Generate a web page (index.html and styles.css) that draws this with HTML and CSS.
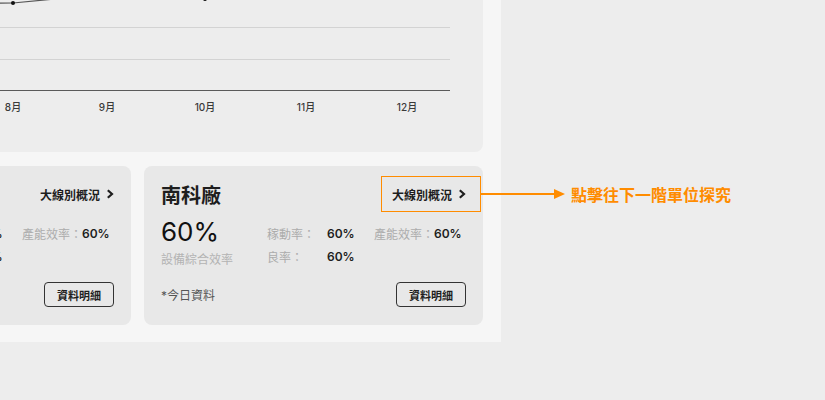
FILE: index.html
```html
<!DOCTYPE html>
<html lang="zh-Hant">

<head>
    <meta charset="utf-8">
    <title>廠區總覽</title>
    <link rel="stylesheet" href="styles.css">
</head>

<body>
    <div class="page">
        <section class="panel">
            <div class="chart-card">
                <svg class="chart" width="691" height="200" viewBox="-208 -48 691 200">
                    <line class="grid-line" x1="-180" y1="27.5" x2="450" y2="27.5" />
                    <line class="grid-line" x1="-180" y1="59.5" x2="450" y2="59.5" />
                    <line class="axis-line" x1="-180" y1="90.5" x2="450" y2="90.5" />
                    <polyline class="trend" points="-86,4 13,3 107,-6 205,-1 306,-22 405,-2" />
                    <circle class="dot" cx="13" cy="3" r="2" />
                    <circle class="dot" cx="107" cy="-6" r="2" />
                    <circle class="dot" cx="205" cy="-1" r="2" />
                    <circle class="dot" cx="306" cy="-22" r="2" />
                    <circle class="dot" cx="405" cy="-2" r="2" />
                    <text class="month" x="13" y="111">8月</text>
                    <text class="month" x="107" y="111">9月</text>
                    <text class="month" x="205" y="111">10月</text>
                    <text class="month" x="306" y="111">11月</text>
                    <text class="month" x="407" y="111">12月</text>
                </svg>
            </div>

            <div class="plant-list">
                <article class="plant-card">
                    <div class="plant-head">
                        <h2 class="plant-name">中科廠</h2>
                        <a class="drill-link" href="#">大線別概況
                            <svg width="8" height="10" viewBox="0 0 8 10"><path d="M1.8 1.2 L6 5 L1.8 8.8" /></svg>
                        </a>
                    </div>
                    <div class="plant-body">
                        <div class="oee">
                            <div class="oee-value">60%</div>
                            <div class="oee-label">設備綜合效率</div>
                        </div>
                        <div class="stats">
                            <span class="stat-label">稼動率：</span><span class="stat-value">60%</span>
                            <span class="stat-label">產能效率：</span><span class="stat-value">60%</span>
                            <span class="stat-label">良率：</span><span class="stat-value">60%</span>
                        </div>
                    </div>
                    <div class="plant-foot">
                        <span class="note">*今日資料</span>
                        <button class="detail-btn">資料明細</button>
                    </div>
                </article>

                <article class="plant-card">
                    <div class="plant-head">
                        <h2 class="plant-name">南科廠</h2>
                        <a class="drill-link is-noted" href="#">大線別概況
                            <svg width="8" height="10" viewBox="0 0 8 10"><path d="M1.8 1.2 L6 5 L1.8 8.8" /></svg>
                            <span class="callout">
                                <span class="callout-line"></span>
                                <span class="callout-head"></span>
                                <span class="callout-text">點擊往下一階單位探究</span>
                            </span>
                        </a>
                    </div>
                    <div class="plant-body">
                        <div class="oee">
                            <div class="oee-value">60%</div>
                            <div class="oee-label">設備綜合效率</div>
                        </div>
                        <div class="stats">
                            <span class="stat-label">稼動率：</span><span class="stat-value">60%</span>
                            <span class="stat-label">產能效率：</span><span class="stat-value">60%</span>
                            <span class="stat-label">良率：</span><span class="stat-value">60%</span>
                        </div>
                    </div>
                    <div class="plant-foot">
                        <span class="note">*今日資料</span>
                        <button class="detail-btn">資料明細</button>
                    </div>
                </article>
            </div>
        </section>
    </div>
</body>

</html>
```

FILE: styles.css
```css
* {
    padding: 0;
    margin: 0;
    box-sizing: border-box;
}

body {
    height: 400px;
    overflow: hidden;
    background-color: #ededed;
    font-family: "Inter", "Noto Sans CJK TC", sans-serif;
    color: #222222;
}

/* the view is scrolled: the panel starts above and left of the window */
.page {
    margin: -65px 0 0 -225px;
}

.panel {
    width: 726px;
    padding: 17px 18px 17px 17px;
    background-color: #f6f6f6;
}

.chart-card {
    height: 200px;
    background-color: #ededed;
    border-radius: 8px;
}

.chart {
    display: block;
}

.grid-line {
    stroke: #d3d3d3;
    stroke-width: 1;
}

.axis-line {
    stroke: #5a5a5a;
    stroke-width: 1.2;
}

.trend {
    fill: none;
    stroke: #555555;
    stroke-width: 1.2;
}

.dot {
    fill: #111111;
}

.month {
    font-family: "Inter", "Noto Sans CJK TC", sans-serif;
    font-size: 10px;
    font-weight: 500;
    fill: #3a3a3a;
    text-anchor: middle;
}

.plant-list {
    display: grid;
    grid-template-columns: 339px 339px;
    gap: 13px;
    margin-top: 14px;
}

.plant-card {
    height: 159px;
    padding: 14px 17px 18px;
    display: flex;
    flex-direction: column;
    background-color: #e8e8e8;
    border-radius: 8px;
}

.plant-head {
    height: 28px;
    display: flex;
    justify-content: space-between;
    align-items: center;
}

.plant-name {
    font-size: 20px;
    font-weight: 600;
    color: #1e1e1e;
}

.drill-link {
    position: relative;
    height: 36px;
    margin: -4px -15px -4px 0;
    padding: 0 14px 0 10px;
    display: flex;
    align-items: center;
    gap: 6px;
    border: 1px solid transparent;
    font-size: 12px;
    font-weight: 600;
    color: #1e1e1e;
    text-decoration: none;
}

.drill-link path {
    fill: none;
    stroke: #1e1e1e;
    stroke-width: 2.2;
}

.drill-link.is-noted {
    border-color: #ff8c00;
}

.callout {
    position: absolute;
    left: 100%;
    top: 50%;
    transform: translateY(-50%);
    display: flex;
    align-items: center;
    white-space: nowrap;
}

.callout-line {
    width: 74px;
    height: 1.5px;
    background-color: #ff8c00;
}

.callout-head {
    border-left: 11px solid #ff8c00;
    border-top: 5px solid transparent;
    border-bottom: 5px solid transparent;
}

.callout-text {
    margin-left: 6px;
    font-size: 16px;
    font-weight: 700;
    color: #ff8c00;
}

.plant-body {
    display: flex;
    margin-top: 9px;
}

.oee {
    width: 106px;
}

.oee-value {
    font-size: 26px;
    line-height: 30px;
    color: #111111;
}

.oee-label {
    margin-top: 4px;
    font-size: 12px;
    line-height: 18px;
    color: #b3b3b3;
}

.stats {
    padding-top: 5px;
    display: grid;
    grid-template-columns: 60px 47px 60px auto;
    grid-auto-rows: 23px;
    align-items: center;
    font-size: 12px;
}

.stat-label {
    color: #acacac;
}

.stat-value {
    font-weight: 600;
    color: #1e1e1e;
}

.plant-foot {
    margin-top: auto;
    display: flex;
    justify-content: space-between;
    align-items: center;
}

.note {
    font-size: 12px;
    color: #555555;
}

.detail-btn {
    width: 70px;
    height: 25px;
    border: 1px solid #333333;
    border-radius: 4px;
    background: transparent;
    font-family: "Inter", "Noto Sans CJK TC", sans-serif;
    font-size: 11px;
    font-weight: 600;
    color: #1e1e1e;
    cursor: pointer;
}
```
